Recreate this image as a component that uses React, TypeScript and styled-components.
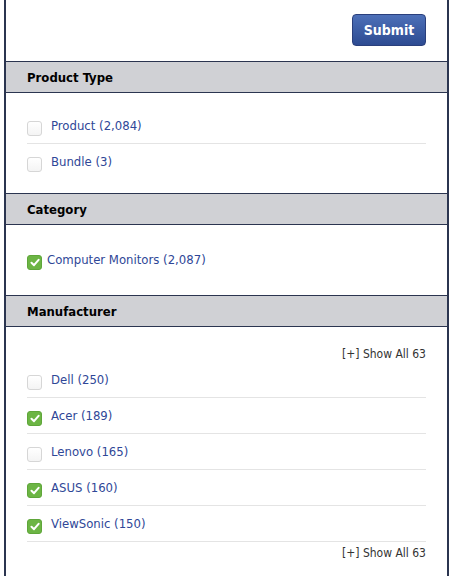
import styled, { createGlobalStyle } from 'styled-components'

const GlobalStyle = createGlobalStyle`
  body {
    margin: 0;
    background: #fff;
    font-family: 'DejaVu Sans Condensed', 'DejaVu Sans', Verdana, sans-serif;
  }
`

const Panel = styled.div`
  margin-left: 4px;
  width: 441px;
  border-left: 2px solid #2b3550;
  border-right: 2px solid #2b3550;
  min-height: 576px;
  box-sizing: content-box;
`

const Toolbar = styled.div`
  height: 61px;
  display: flex;
  justify-content: flex-end;
  align-items: flex-start;
  padding: 14px 21px 0;
  box-sizing: border-box;
`

const SubmitButton = styled.button`
  width: 74px;
  height: 32px;
  border: 1px solid #2a3f7c;
  border-radius: 4px;
  background: linear-gradient(#4d70b8, #2d4b92);
  color: #fff;
  font-family: inherit;
  font-weight: bold;
  font-size: 14px;
  cursor: pointer;
`

const SectionHeader = styled.div`
  height: 30px;
  display: flex;
  align-items: center;
  padding-left: 21px;
  background: #d0d1d5;
  border-top: 1px solid #2b3550;
  border-bottom: 1px solid #2b3550;
  font-weight: bold;
  font-size: 13px;
  color: #000;
`

const SectionBody = styled.div<{ $top: number; $bottom: number }>`
  padding: ${(p) => p.$top}px 21px ${(p) => p.$bottom}px;
`

const Row = styled.label<{ $gap: number }>`
  height: 35px;
  display: flex;
  align-items: center;
  gap: ${(p) => p.$gap}px;
  border-bottom: 1px solid #e4e4e4;
  cursor: pointer;
`

const OptionList = styled.div<{ $lastBorder: boolean }>`
  & > label:last-child {
    border-bottom: ${(p) => (p.$lastBorder ? '1px solid #e4e4e4' : 'none')};
  }
`

const Box = styled.span<{ $checked: boolean }>`
  width: 15px;
  height: 15px;
  margin-top: 6px;
  box-sizing: border-box;
  border-radius: 3px;
  flex-shrink: 0;
  display: flex;
  align-items: center;
  justify-content: center;
  border: 1px solid ${(p) => (p.$checked ? '#5fa63a' : '#d6d6d6')};
  background: ${(p) => (p.$checked ? '#6cb544' : 'linear-gradient(#fff, #f4f4f4)')};
`

const Label = styled.span`
  font-size: 13px;
  color: #2f4797;
`

const ShowAll = styled.div<{ $top?: number }>`
  height: 17px;
  margin-top: ${(p) => p.$top ?? 0}px;
  display: flex;
  align-items: center;
  justify-content: flex-end;
  font-size: 12px;
  color: #333;
`

interface Option {
  label: string
  checked?: boolean
}

function Check({ checked }: { checked: boolean }) {
  return (
    <Box $checked={checked}>
      {checked && (
        <svg width="10" height="9" viewBox="0 0 10 9">
          <path d="M1.5 4.8 L4 7.2 L8.6 1.8" fill="none" stroke="#fff" strokeWidth="2" strokeLinecap="round" strokeLinejoin="round" />
        </svg>
      )}
    </Box>
  )
}

function Options({ items, gap = 9, lastBorder = false }: { items: Option[]; gap?: number; lastBorder?: boolean }) {
  return (
    <OptionList $lastBorder={lastBorder}>
      {items.map((item) => (
        <Row key={item.label} $gap={gap}>
          <Check checked={!!item.checked} />
          <Label>{item.label}</Label>
        </Row>
      ))}
    </OptionList>
  )
}

const manufacturers: Option[] = [
  { label: 'Dell (250)' },
  { label: 'Acer (189)', checked: true },
  { label: 'Lenovo (165)' },
  { label: 'ASUS (160)', checked: true },
  { label: 'ViewSonic (150)', checked: true },
]

export default function App() {
  return (
    <>
      <GlobalStyle />
      <Panel>
        <Toolbar>
          <SubmitButton>Submit</SubmitButton>
        </Toolbar>

        <SectionHeader>Product Type</SectionHeader>
        <SectionBody $top={15} $bottom={14}>
          <Options items={[{ label: 'Product (2,084)' }, { label: 'Bundle (3)' }]} />
        </SectionBody>

        <SectionHeader>Category</SectionHeader>
        <SectionBody $top={17} $bottom={18}>
          <Options items={[{ label: 'Computer Monitors (2,087)', checked: true }]} gap={5} />
        </SectionBody>

        <SectionHeader>Manufacturer</SectionHeader>
        <SectionBody $top={18} $bottom={10}>
          <ShowAll>[+] Show All 63</ShowAll>
          <Options items={manufacturers} lastBorder />
          <ShowAll $top={2}>[+] Show All 63</ShowAll>
        </SectionBody>
      </Panel>
    </>
  )
}
